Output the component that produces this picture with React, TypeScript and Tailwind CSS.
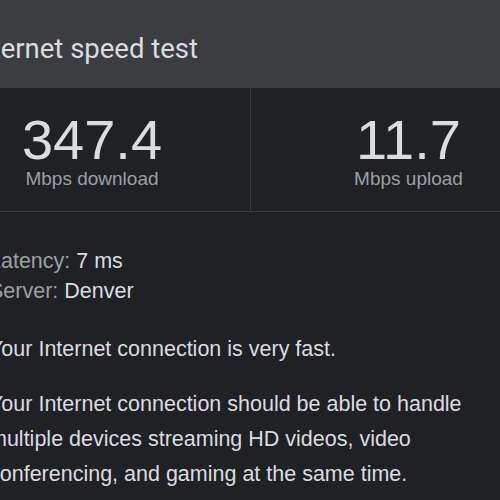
import React from "react";

const sans = { fontFamily: '"Liberation Sans", Arial, sans-serif' };

function Stat({ value, label, divider }: { value: string; label: string; divider?: boolean }) {
  return (
    <div
      className={
        "flex flex-col items-center justify-center pt-[2px] " +
        (divider ? "border-l border-[#3a3b3f]" : "")
      }
    >
      <div className="text-[56px] leading-[56px] text-[#dadce0]">{value}</div>
      <div className="text-[19px] leading-[22px] text-[#9aa0a6]">{label}</div>
    </div>
  );
}

export default function App() {
  return (
    <div className="w-[500px] h-[500px] overflow-hidden bg-[#202124]" style={sans}>
      <div className="ml-[-66px] w-[632px]">
        {/* header */}
        <div
          className="h-[88px] bg-[#3c3d41] flex items-center pl-[35px] pt-[10px] text-[27.5px] text-[#dadce0]"
          style={{ fontFamily: "Roboto, sans-serif" }}
        >
          Internet speed test
        </div>

        {/* results */}
        <div className="grid grid-cols-2 h-[124px] border-b border-[#3a3b3f]">
          <Stat value="347.4" label="Mbps download" />
          <Stat value="11.7" label="Mbps upload" divider />
        </div>

        {/* details */}
        <div className="pl-[55px] pt-[34px] text-[21.5px] text-[#dadce0]">
          <div className="leading-[30px]">
            <div>
              <span className="text-[#9aa0a6]">Latency:</span> 7 ms
            </div>
            <div>
              <span className="text-[#9aa0a6]">Server:</span> Denver
            </div>
          </div>
          <p className="mt-[26px] leading-[35px]">Your Internet connection is very fast.</p>
          <p className="mt-[20px] leading-[35px] w-[505px]">
            Your Internet connection should be able to handle multiple devices streaming HD videos,
            video conferencing, and gaming at the same time.
          </p>
        </div>
      </div>
    </div>
  );
}
